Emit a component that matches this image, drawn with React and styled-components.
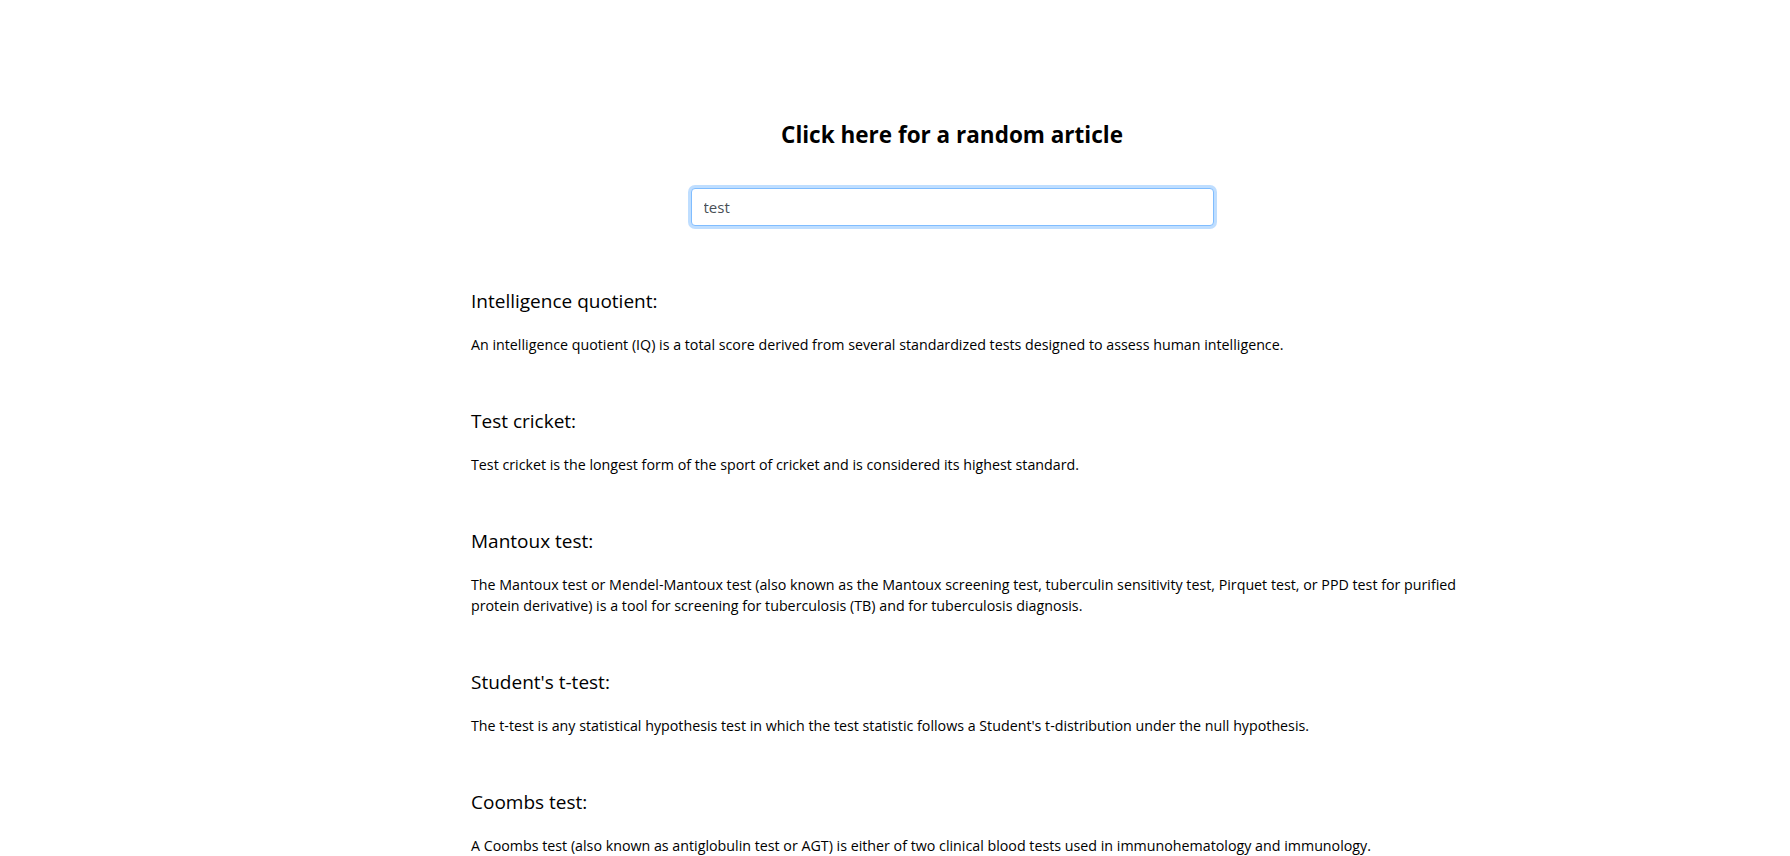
import styled, { createGlobalStyle } from "styled-components";

const GlobalStyle = createGlobalStyle`
  body {
    margin: 0;
    background: #fff;
    font-family: "Segoe UI", "Open Sans", "Noto Sans", sans-serif;
    color: #000;
  }
`;

const Page = styled.main`
  width: 1000px;
  margin-left: 471px;
  padding-top: 120px;
`;

const Header = styled.header`
  width: 962px;
  display: flex;
  flex-direction: column;
  align-items: center;

  h2 {
    margin: 0;
    font-size: 22.5px;
    line-height: 29px;
    font-weight: 700;
  }
`;

const Search = styled.input`
  box-sizing: border-box;
  width: 523px;
  height: 38px;
  margin-top: 39px;
  padding: 6px 12px;
  font-family: inherit;
  font-size: 15px;
  color: #495057;
  caret-color: #000;
  background: #fff;
  border: 1px solid #80bdff;
  border-radius: 4px;
  box-shadow: 0 0 0 3px rgba(0, 123, 255, 0.25);
  outline: none;
`;

const Results = styled.section`
  margin-top: 64px;
`;

const Article = styled.article`
  margin-bottom: 55px;

  h4 {
    margin: 0 0 22px;
    font-size: 19px;
    line-height: 22px;
    font-weight: 400;
  }

  p {
    margin: 0;
    font-size: 14.25px;
    line-height: 21px;
  }
`;

const articles = [
  {
    title: "Intelligence quotient",
    text: "An intelligence quotient (IQ) is a total score derived from several standardized tests designed to assess human intelligence.",
  },
  {
    title: "Test cricket",
    text: "Test cricket is the longest form of the sport of cricket and is considered its highest standard.",
  },
  {
    title: "Mantoux test",
    text: "The Mantoux test or Mendel-Mantoux test (also known as the Mantoux screening test, tuberculin sensitivity test, Pirquet test, or PPD test for purified protein derivative) is a tool for screening for tuberculosis (TB) and for tuberculosis diagnosis.",
  },
  {
    title: "Student's t-test",
    text: "The t-test is any statistical hypothesis test in which the test statistic follows a Student's t-distribution under the null hypothesis.",
  },
  {
    title: "Coombs test",
    text: "A Coombs test (also known as antiglobulin test or AGT) is either of two clinical blood tests used in immunohematology and immunology.",
  },
];

const App = () => {
  return (
    <>
      <GlobalStyle />
      <Page>
        <Header>
          <h2>Click here for a random article</h2>
          <Search
            type="text"
            defaultValue="test"
            autoFocus
            onFocus={(e) => {
              const n = e.target.value.length;
              e.target.setSelectionRange(n, n);
            }}
          />
        </Header>
        <Results>
          {articles.map((a) => (
            <Article key={a.title}>
              <h4>{a.title}:</h4>
              <p>{a.text}</p>
            </Article>
          ))}
        </Results>
      </Page>
    </>
  );
};

export default App;
